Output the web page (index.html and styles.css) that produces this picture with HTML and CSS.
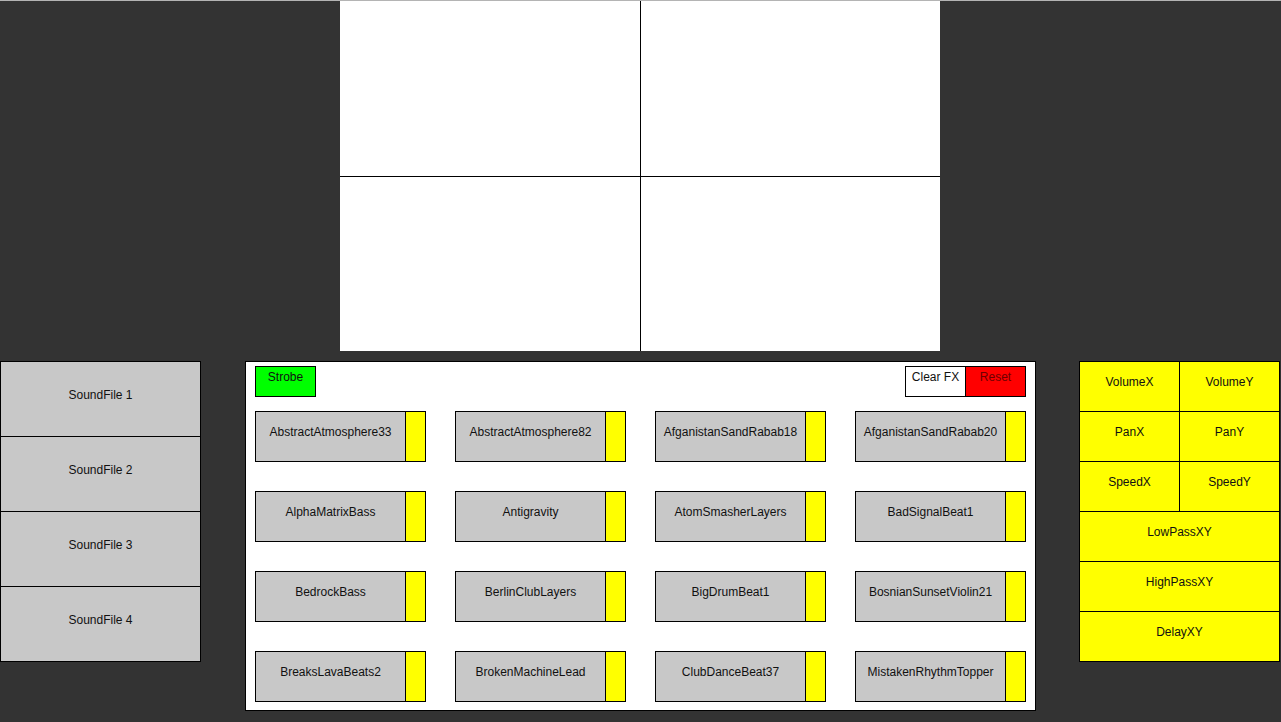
FILE: index.html
```html
<!DOCTYPE html>
<html lang="en">
<head>
    <meta charset="UTF-8">
    <meta name="viewport" content="width=device-width, initial-scale=1.0">
    <title>Sample Pad</title>
    <link rel="stylesheet" href="styles.css">
</head>
<body>
    <div class="top-line"></div>

    <div class="stage">
        <div class="xy-canvas">
            <div class="quad quad-tl"></div>
            <div class="quad quad-tr"></div>
            <div class="quad quad-bl"></div>
            <div class="quad quad-br"></div>
        </div>
    </div>

    <div class="controls">
        <div class="sound-files">
            <div class="sound-file"><span>SoundFile 1</span></div>
            <div class="sound-file"><span>SoundFile 2</span></div>
            <div class="sound-file"><span>SoundFile 3</span></div>
            <div class="sound-file"><span>SoundFile 4</span></div>
        </div>

        <div class="sample-panel">
            <div class="sample-toolbar">
                <button class="btn btn-strobe">Strobe</button>
                <div class="fx-group">
                    <button class="btn btn-clear">Clear FX</button>
                    <button class="btn btn-reset">Reset</button>
                </div>
            </div>
            <div class="sample-grid">
                <div class="sample"><span class="sample-name">AbstractAtmosphere33</span><span class="sample-tab"></span></div>
                <div class="sample"><span class="sample-name">AbstractAtmosphere82</span><span class="sample-tab"></span></div>
                <div class="sample"><span class="sample-name">AfganistanSandRabab18</span><span class="sample-tab"></span></div>
                <div class="sample"><span class="sample-name">AfganistanSandRabab20</span><span class="sample-tab"></span></div>
                <div class="sample"><span class="sample-name">AlphaMatrixBass</span><span class="sample-tab"></span></div>
                <div class="sample"><span class="sample-name">Antigravity</span><span class="sample-tab"></span></div>
                <div class="sample"><span class="sample-name">AtomSmasherLayers</span><span class="sample-tab"></span></div>
                <div class="sample"><span class="sample-name">BadSignalBeat1</span><span class="sample-tab"></span></div>
                <div class="sample"><span class="sample-name">BedrockBass</span><span class="sample-tab"></span></div>
                <div class="sample"><span class="sample-name">BerlinClubLayers</span><span class="sample-tab"></span></div>
                <div class="sample"><span class="sample-name">BigDrumBeat1</span><span class="sample-tab"></span></div>
                <div class="sample"><span class="sample-name">BosnianSunsetViolin21</span><span class="sample-tab"></span></div>
                <div class="sample"><span class="sample-name">BreaksLavaBeats2</span><span class="sample-tab"></span></div>
                <div class="sample"><span class="sample-name">BrokenMachineLead</span><span class="sample-tab"></span></div>
                <div class="sample"><span class="sample-name">ClubDanceBeat37</span><span class="sample-tab"></span></div>
                <div class="sample"><span class="sample-name">MistakenRhythmTopper</span><span class="sample-tab"></span></div>
            </div>
        </div>

        <div class="fx-panel">
            <div class="fx-cell">VolumeX</div>
            <div class="fx-cell">VolumeY</div>
            <div class="fx-cell">PanX</div>
            <div class="fx-cell">PanY</div>
            <div class="fx-cell">SpeedX</div>
            <div class="fx-cell">SpeedY</div>
            <div class="fx-cell fx-wide">LowPassXY</div>
            <div class="fx-cell fx-wide">HighPassXY</div>
            <div class="fx-cell fx-wide">DelayXY</div>
        </div>
    </div>
</body>
</html>
```

FILE: styles.css
```css
:root {
    --bg: #333333;
    --line: #000000;
    --pad: #c8c8c8;
    --yellow: #ffff00;
    --green: #00ff00;
    --red: #ff0000;
    --text: #111111;
}

* {
    box-sizing: border-box;
}

body {
    margin: 0;
    padding: 0;
    background: var(--bg);
    font-family: "Liberation Sans", Arial, sans-serif;
    font-size: 12px;
    color: var(--text);
    width: 1281px;
    height: 722px;
    overflow: hidden;
}

.top-line {
    height: 1px;
    background: #b4b4b4;
}

/* XY canvas */
.stage {
    display: flex;
    justify-content: center;
    padding-right: 1px;
}

.xy-canvas {
    width: 600px;
    height: 350px;
    background: #ffffff;
    display: grid;
    grid-template-columns: 301px 299px;
    grid-template-rows: 176px 174px;
}

.quad-tl,
.quad-bl {
    border-right: 1px solid var(--line);
}

.quad-tl,
.quad-tr {
    border-bottom: 1px solid var(--line);
}

/* Bottom controls */
.controls {
    margin-top: 10px;
    display: flex;
    align-items: flex-start;
}

.sound-files {
    width: 201px;
    border: 1px solid var(--line);
    border-bottom: none;
    display: flex;
    flex-direction: column;
}

.sound-file {
    height: 75px;
    background: var(--pad);
    border-bottom: 1px solid var(--line);
    display: flex;
    align-items: center;
    justify-content: center;
    padding-bottom: 9px;
}

.sample-panel {
    margin-left: 44px;
    width: 791px;
    height: 350px;
    background: #ffffff;
    border: 1px solid var(--line);
    padding: 4px 9px 8px;
}

.sample-toolbar {
    display: flex;
    justify-content: space-between;
    height: 31px;
    margin-bottom: 14px;
}

.btn {
    font-family: inherit;
    font-size: 12px;
    color: var(--text);
    height: 31px;
    margin: 0;
    border: 1px solid var(--line);
    border-radius: 0;
    padding: 0 0 9px;
    display: flex;
    align-items: center;
    justify-content: center;
}

.btn-strobe {
    width: 61px;
    background: var(--green);
}

.fx-group {
    display: flex;
}

.btn-clear {
    width: 61px;
    background: #ffffff;
}

.btn-reset {
    width: 60px;
    background: var(--red);
    border-left: none;
    color: #6e0000;
}

.sample-grid {
    display: grid;
    grid-template-columns: repeat(4, 171px);
    grid-auto-rows: 51px;
    column-gap: 29px;
    row-gap: 29px;
}

.sample {
    display: flex;
    border: 1px solid var(--line);
}

.sample-name {
    flex: 1;
    background: var(--pad);
    display: flex;
    align-items: center;
    justify-content: center;
    padding-bottom: 9px;
    white-space: nowrap;
}

.sample-tab {
    width: 20px;
    background: var(--yellow);
    border-left: 1px solid var(--line);
}

.fx-panel {
    margin-left: 43px;
    width: 201px;
    border-top: 1px solid var(--line);
    border-left: 1px solid var(--line);
    display: grid;
    grid-template-columns: 100px 100px;
    grid-auto-rows: 50px;
}

.fx-cell {
    background: var(--yellow);
    border-right: 1px solid var(--line);
    border-bottom: 1px solid var(--line);
    display: flex;
    align-items: center;
    justify-content: center;
    padding-bottom: 9px;
}

.fx-wide {
    grid-column: span 2;
}
```
